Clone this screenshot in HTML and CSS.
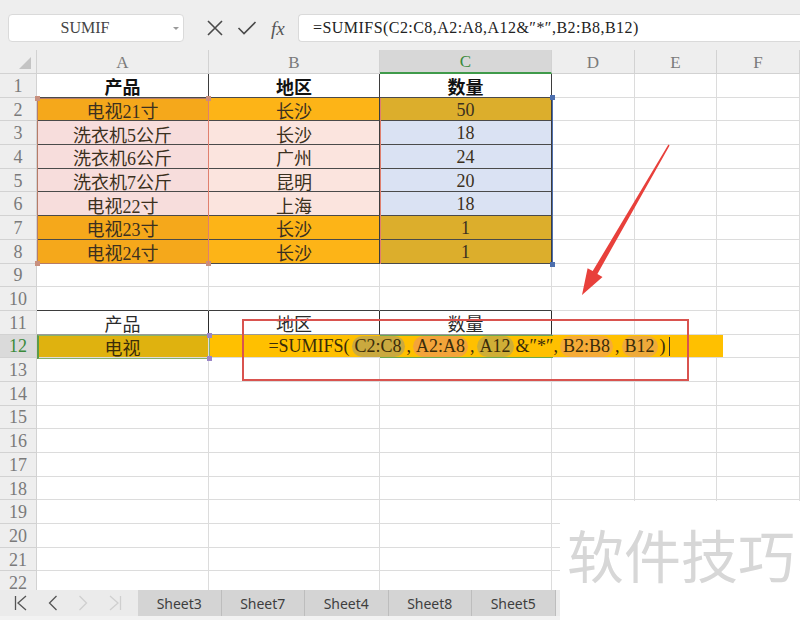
FILE: index.html
```html
<!DOCTYPE html>
<html lang="zh">
<head>
<meta charset="utf-8">
<title>SUMIFS</title>
<link rel="stylesheet" href="styles.css">
</head>
<body>
<div class="app">
  <div class="toolbar">
    <div class="namebox"><span class="nb-text">SUMIF</span><span class="nb-caret"></span></div>
    <div class="tools">
      <svg class="ic" width="18" height="18" viewBox="0 0 18 18"><path d="M2 2 L16 16 M16 2 L2 16" stroke="#4a4a4a" stroke-width="1.6" fill="none"/></svg>
      <svg class="ic" width="20" height="18" viewBox="0 0 20 18"><path d="M1.5 9 L7 14.5 L18.5 3" stroke="#4a4a4a" stroke-width="1.6" fill="none"/></svg>
      <span class="fx">fx</span>
    </div>
    <div class="fbar">=SUMIFS(C2:C8,A2:A8,A12&amp;″*″,B2:B8,B12)</div>
  </div>

  <div class="sheet">
    <div class="g">
      <div class="x hd corner"><span class="tri"></span></div>
      <div class="x hd">A</div><div class="x hd">B</div><div class="x hd sel">C</div><div class="x hd">D</div><div class="x hd">E</div><div class="x hd">F</div>

      <div class="x hd rn">1</div><div class="x t b">产品</div><div class="x t b">地区</div><div class="x t b">数量</div><div class="x"></div><div class="x"></div><div class="x"></div>
      <div class="x hd rn">2</div><div class="x t o1">电视21寸</div><div class="x t o2">长沙</div><div class="x t o3">50</div><div class="x"></div><div class="x"></div><div class="x"></div>
      <div class="x hd rn">3</div><div class="x t p1">洗衣机5公斤</div><div class="x t p2">长沙</div><div class="x t bl">18</div><div class="x"></div><div class="x"></div><div class="x"></div>
      <div class="x hd rn">4</div><div class="x t p1">洗衣机6公斤</div><div class="x t p2">广州</div><div class="x t bl">24</div><div class="x"></div><div class="x"></div><div class="x"></div>
      <div class="x hd rn">5</div><div class="x t p1">洗衣机7公斤</div><div class="x t p2">昆明</div><div class="x t bl">20</div><div class="x"></div><div class="x"></div><div class="x"></div>
      <div class="x hd rn">6</div><div class="x t p1">电视22寸</div><div class="x t p2">上海</div><div class="x t bl">18</div><div class="x"></div><div class="x"></div><div class="x"></div>
      <div class="x hd rn">7</div><div class="x t o1">电视23寸</div><div class="x t o2">长沙</div><div class="x t o3">1</div><div class="x"></div><div class="x"></div><div class="x"></div>
      <div class="x hd rn">8</div><div class="x t o1">电视24寸</div><div class="x t o2">长沙</div><div class="x t o3">1</div><div class="x"></div><div class="x"></div><div class="x"></div>
      <div class="x hd rn">9</div><div class="x"></div><div class="x"></div><div class="x"></div><div class="x"></div><div class="x"></div><div class="x"></div>
      <div class="x hd rn">10</div><div class="x tb"></div><div class="x tb"></div><div class="x tb"></div><div class="x"></div><div class="x"></div><div class="x"></div>
      <div class="x hd rn">11</div><div class="x t2">产品</div><div class="x t2">地区</div><div class="x t2">数量</div><div class="x"></div><div class="x"></div><div class="x"></div>
      <div class="x hd rn sel2">12</div><div class="x a12">电视</div>
      <div class="x host">
        <div class="edit">=SUMIFS(<span class="r r1">C2:C8</span>,<span class="r r2">A2:A8</span>,<span class="r r3">A12</span>&amp;″*″,<span class="r r4">B2:B8</span>,<span class="r r5">B12</span>)<span class="cursor"></span></div>
      </div>
      <div class="x"></div><div class="x"></div><div class="x"></div><div class="x"></div>
      <div class="x hd rn">13</div><div class="x"></div><div class="x"></div><div class="x"></div><div class="x"></div><div class="x"></div><div class="x"></div>
      <div class="x hd rn">14</div><div class="x"></div><div class="x"></div><div class="x"></div><div class="x"></div><div class="x"></div><div class="x"></div>
      <div class="x hd rn">15</div><div class="x"></div><div class="x"></div><div class="x"></div><div class="x"></div><div class="x"></div><div class="x"></div>
      <div class="x hd rn">16</div><div class="x"></div><div class="x"></div><div class="x"></div><div class="x"></div><div class="x"></div><div class="x"></div>
      <div class="x hd rn">17</div><div class="x"></div><div class="x"></div><div class="x"></div><div class="x"></div><div class="x"></div><div class="x"></div>
      <div class="x hd rn">18</div><div class="x"></div><div class="x"></div><div class="x"></div><div class="x"></div><div class="x"></div><div class="x"></div>
      <div class="x hd rn">19</div><div class="x"></div><div class="x"></div><div class="x"></div><div class="x"></div><div class="x"></div><div class="x"></div>
      <div class="x hd rn">20</div><div class="x"></div><div class="x"></div><div class="x"></div><div class="x"></div><div class="x"></div><div class="x"></div>
      <div class="x hd rn">21</div><div class="x"></div><div class="x"></div><div class="x"></div><div class="x"></div><div class="x"></div><div class="x"></div>
      <div class="x hd rn">22</div><div class="x"></div><div class="x"></div><div class="x"></div><div class="x"></div><div class="x"></div><div class="x"></div>
    </div>

    <div class="ref refA"><i class="h h1"></i><i class="h h2"></i><i class="h h3"></i><i class="h h4"></i></div>
    <div class="ref refB"></div>
    <div class="ref refC"><i class="h h2 hb"></i><i class="h h4 hb"></i></div>
    <div class="ref refA12"><i class="h h2 hp"></i><i class="h h4 hp"></i></div>
    <div class="c12line"></div>
  </div>

  <div class="tabs">
    <div class="nav">
      <svg width="14" height="16" viewBox="0 0 14 16"><path d="M1.5 1 V15 M12 1 L4 8 L12 15" stroke="#555" stroke-width="1.3" fill="none"/></svg>
      <svg width="10" height="16" viewBox="0 0 10 16"><path d="M8.5 1 L1.5 8 L8.5 15" stroke="#555" stroke-width="1.3" fill="none"/></svg>
      <svg width="10" height="16" viewBox="0 0 10 16"><path d="M1.5 1 L8.5 8 L1.5 15" stroke="#cfcfcf" stroke-width="1.3" fill="none"/></svg>
      <svg width="14" height="16" viewBox="0 0 14 16"><path d="M2 1 L10 8 L2 15 M12.5 1 V15" stroke="#cfcfcf" stroke-width="1.3" fill="none"/></svg>
    </div>
    <div class="tab">Sheet3</div>
    <div class="tab">Sheet7</div>
    <div class="tab">Sheet4</div>
    <div class="tab">Sheet8</div>
    <div class="tab">Sheet5</div>
    <div class="rest"></div>
  </div>
  <div class="foot"></div>

  <div class="redbox"></div>
  <svg class="arrow" width="800" height="620" viewBox="0 0 800 620">
    <polygon points="669.6,145.4 597.4,273.9 602.5,277 582,295 587.6,268.2 592.7,271.1 668.4,144.6" fill="#e8403b"/>
  </svg>
  <div class="watermark">软件技巧</div>
</div>
</body>
</html>
```

FILE: styles.css
```css
* { box-sizing: border-box; }
html, body { margin: 0; padding: 0; }
body { width: 800px; height: 620px; overflow: hidden; background: #fff; }

.app { position: relative; width: 800px; height: 620px; overflow: hidden; }

.toolbar {
  height: 50px;
  background: #eeeeee;
  display: flex;
  align-items: flex-start;
  padding-top: 14px;
}
.namebox {
  margin-left: 8px;
  width: 176px;
  height: 28px;
  background: #fff;
  border: 1px solid #dadada;
  border-radius: 4px;
  display: flex;
  align-items: center;
  position: relative;
}
.nb-text {
  flex: 1;
  text-align: center;
  font-family: "Liberation Serif", "DejaVu Serif", serif;
  font-size: 16px;
  color: #444;
  padding-right: 12px;
}
.nb-caret {
  width: 0; height: 0;
  border-left: 3px solid transparent;
  border-right: 3px solid transparent;
  border-top: 3px solid #9a9a9a;
  margin-right: 4px;
}
.tools {
  width: 114px;
  height: 28px;
  display: flex;
  align-items: center;
  padding-left: 22px;
  gap: 13px;
}
.ic { display: block; }
.fx {
  font-family: "Liberation Serif", serif;
  font-style: italic;
  font-size: 19px;
  color: #555;
  margin-left: 1px;
  line-height: 1;
}
.fbar {
  flex: 1;
  height: 28px;
  background: #fff;
  border: 1px solid #dadada;
  border-right: none;
  border-radius: 4px 0 0 4px;
  display: flex;
  align-items: center;
  padding-left: 14px;
  font-family: "Liberation Serif", "Noto Sans CJK SC", serif;
  font-size: 16px;
  letter-spacing: 0.45px;
  color: #222;
  white-space: nowrap;
}

.sheet { position: relative; height: 540px; overflow: hidden; }
.g {
  display: grid;
  grid-template-columns: 37px 172px 171px 172px 83px 82px 83px;
  grid-template-rows: 24px repeat(22, 23.7px);
}
.x {
  border-right: 1px solid #dcdcdc;
  border-bottom: 1px solid #dcdcdc;
  display: flex;
  align-items: center;
  justify-content: center;
  padding-top: 2px;
  font-family: "Liberation Serif", "Noto Sans CJK SC", serif;
  font-size: 18px;
  color: #3b3020;
  white-space: nowrap;
}
.hd {
  background: #eeeeee;
  color: #7a7a7a;
  font-size: 17px;
  border-right-color: #d2d2d2;
  border-bottom-color: #d2d2d2;
}
.rn { font-size: 18px; }
.corner { position: relative; }
.tri {
  position: absolute;
  right: 5px; bottom: 4px;
  width: 0; height: 0;
  border-left: 12px solid transparent;
  border-bottom: 12px solid #c4c4c4;
}
.sel { background: #d7d7d7; color: #3a8a3a; border-bottom: 2px solid #3f9a4a; }
.sel2 { background: #dadada; color: #3a8a3a; }

.t { border-right-color: #3d3d3d; border-bottom-color: #4a4a4a; }
.tb { border-bottom-color: #3d3d3d; }
.t2 { border-right-color: #2d2d2d; border-bottom-color: #9a9a9a; color: #2a2a2a; }
.b { font-weight: bold; color: #111; }
.o1 { background: #f5a81b; }
.o2 { background: #fdb417; }
.o3 { background: #dcae2c; }
.p1 { background: #f7dddc; }
.p2 { background: #fbe4de; }
.bl { background: #dae2f3; }
.a12 { background: #dfb20f; color: #3a2c0a; }

.host { position: relative; }
.edit {
  position: absolute;
  left: 0; top: 0;
  width: 514px;
  height: 100%;
  background: #ffc000;
  z-index: 2;
  display: flex;
  align-items: center;
  justify-content: center;
  padding-top: 2px;
  font-family: "Liberation Serif", "Noto Sans CJK SC", serif;
  font-size: 18px;
  color: #3a2c0a;
  white-space: nowrap;
  padding-left: 6px;
}
.r { border-radius: 11px; padding: 0 3px; margin: 0 2px; line-height: 21px; }
.r1 { background: #caa93f; }
.r2 { background: #f3a43a; }
.r3 { background: #cfae36; }
.r4 { background: #f6ab37; }
.r5 { background: #eeaa3a; }
.cursor { display: inline-block; width: 1px; height: 19px; background: #333; margin-left: 3px; }

.ref { position: absolute; pointer-events: none; z-index: 3; }
.refA { left: 37px; top: 47.7px; width: 172px; height: 165.9px; border: 1.5px solid #b67c68; }
.refB { left: 208px; top: 47.7px; width: 173px; height: 165.9px; border-left: 1.5px solid #e07f6e; border-right: 1.5px solid #e07f6e; }
.refC { left: 380px; top: 47.7px; width: 173px; height: 165.9px; border-right: 1.5px solid #4d6fae; }
.refA12 { left: 37px; top: 284.6px; width: 173px; height: 24px; border: 1px solid #86b06a; border-left: 2px solid #5d9c48; }
.h { position: absolute; width: 5px; height: 5px; background: #c8907e; }
.h1 { left: -3px; top: -3px; }
.h2 { right: -3px; top: -3px; }
.h3 { left: -3px; bottom: -3px; }
.h4 { right: -3px; bottom: -3px; }
.hb { background: #4d6fae; }
.hp { background: #9a86c8; }
.c12line {
  position: absolute; z-index: 3;
  left: 380px; top: 284.6px; width: 173px; height: 23.7px;
  border-top: 1px solid #6aa84f; border-bottom: 1px solid #6aa84f;
}

.tabs {
  height: 26px;
  display: flex;
  background: #ebebeb;
  font-family: "Noto Sans", "Open Sans", sans-serif;
  font-size: 14px;
  color: #3e3e3e;
}
.nav {
  width: 138px;
  display: flex;
  align-items: center;
  padding-left: 14px;
  gap: 20px;
}
.nav svg { display: block; }
.tab {
  width: 83.5px;
  background: #d4d4d4;
  border-right: 1px solid #bdbdbd;
  display: flex;
  align-items: center;
  justify-content: center;
}
.rest { flex: 1; }
.foot { height: 4px; background: #f2f2f2; }

.redbox {
  position: absolute;
  left: 242px; top: 319px;
  width: 447px; height: 62px;
  border: 2px solid #d9534f;
  z-index: 5;
}
.arrow { position: absolute; left: 0; top: 0; z-index: 6; pointer-events: none; }
.watermark {
  position: absolute;
  left: 560px; top: 501px;
  width: 240px; height: 119px;
  background: #fff;
  z-index: 7;
  font-family: "Noto Sans CJK SC", sans-serif;
  font-size: 57px;
  color: #d7d7d7;
  line-height: 1;
  padding: 24px 0 0 7px;
  white-space: nowrap;
}
```
